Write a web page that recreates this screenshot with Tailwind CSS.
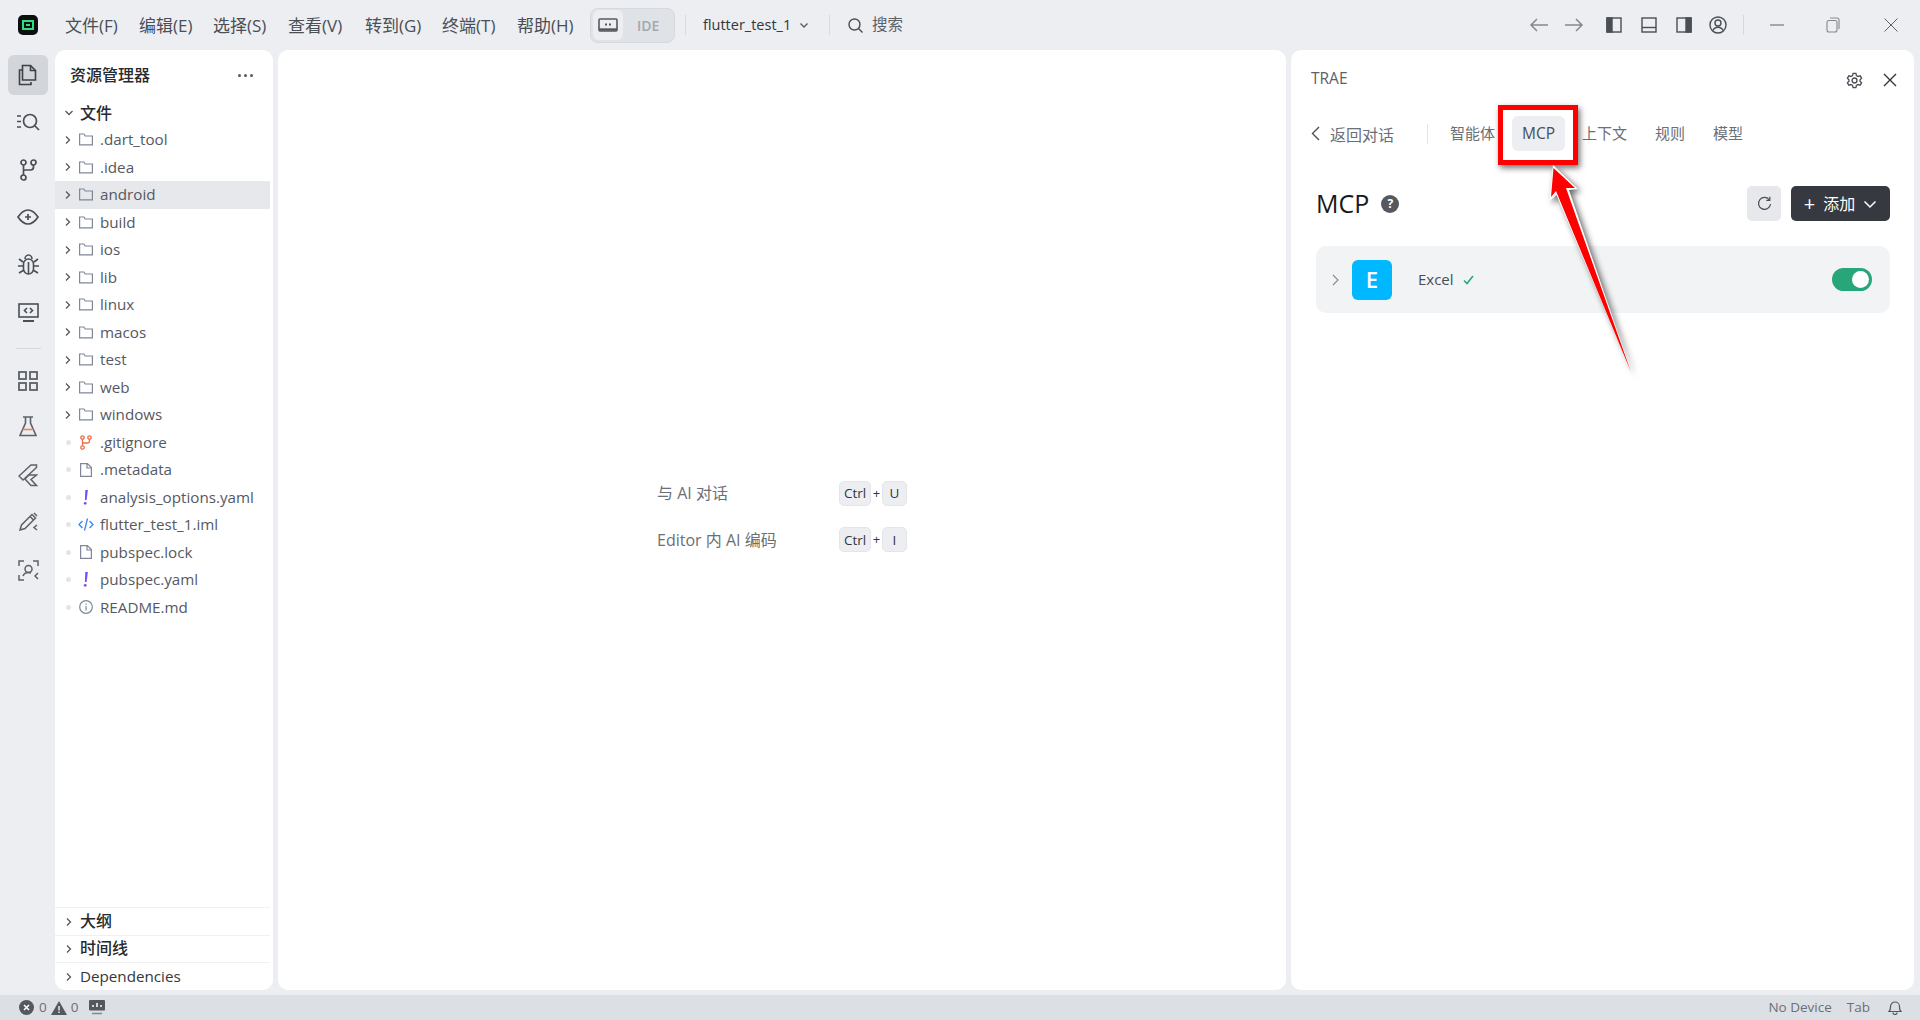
<!DOCTYPE html>
<html lang="zh">
<head>
<meta charset="UTF-8"/>
<title>TRAE</title>
<script src="https://cdn.jsdelivr.net/npm/@tailwindcss/browser@4"></script>
</head>
<body class="relative w-[1920px] h-[1020px] overflow-hidden bg-[#eceef2] text-[#4a4e55] font-['Open_Sans','Noto_Sans_CJK_SC',sans-serif] flex flex-col">

<!-- title bar -->
<header class="h-[50px] flex items-center shrink-0">
  <div class="ml-[18px] w-5 h-5 rounded-[5px] bg-[#0c0f10] flex items-center justify-center">
    <div class="w-3 h-[10px] border-2 border-[#2fdc7e] flex items-center justify-center"><div class="w-1 h-[2px] bg-[#2fdc7e]"></div></div>
  </div>
  <nav class="ml-[27px] flex gap-[20px] text-[17px] text-[#4a4e55] relative top-[1px]">
    <span class="w-[54px]">文件(F)</span><span class="w-[54px]">编辑(E)</span><span class="w-[55px]">选择(S)</span><span class="w-[57px]">查看(V)</span><span class="w-[57px]">转到(G)</span><span class="w-[55px]">终端(T)</span><span class="w-[58px]">帮助(H)</span>
  </nav>
  <div class="ml-[15px] w-[85px] h-[35px] rounded-[8px] bg-[#dfe2e7] border border-[#d5d8de] flex items-center pl-[2px]">
    <div class="w-[30px] h-[30px] rounded-[6px] bg-[#eceef2] flex items-center justify-center">
      <svg width="20" height="16" viewBox="0 0 20 16" fill="none" stroke="#55595f" stroke-width="1.6"><rect x="1" y="2" width="18" height="12" rx="1"/><path d="M1 12.5h18" stroke-width="2.4"/><path d="M7 7.5h2M11 7.5h2" stroke-width="2"/></svg>
    </div>
    <span class="ml-[14px] text-[14px] font-semibold text-[#a3a8b0]">IDE</span>
  </div>
  <div class="ml-[10px] w-px h-5 bg-[#d5d8de]"></div>
  <span class="ml-[17px] w-[86px] text-[14.5px] text-[#33363c]">flutter_test_1</span>
  <svg class="ml-[9px]" width="12" height="12" viewBox="0 0 12 12" fill="none" stroke="#55595f" stroke-width="1.3"><path d="M2.5 4.5 6 8l3.500-3.500"/></svg>
  <div class="ml-[19px] w-px h-5 bg-[#d5d8de]"></div>
  <svg class="ml-[17px]" width="17" height="17" viewBox="0 0 17 17" fill="none" stroke="#4a4e55" stroke-width="1.4"><circle cx="7.500" cy="7.500" r="5.500"/><path d="m11.500 11.500 4 4"/></svg>
  <span class="ml-[8px] text-[15.5px] text-[#5d6168]">搜索</span>

  <div class="ml-auto flex items-center">
    <svg width="20" height="16" viewBox="0 0 20 16" fill="none" stroke="#84888f" stroke-width="1.5"><path d="M19 8H2M8 2 2 8l6 6"/></svg>
    <svg class="ml-[15px]" width="20" height="16" viewBox="0 0 20 16" fill="none" stroke="#84888f" stroke-width="1.5"><path d="M1 8h17M12 2l6 6-6 6"/></svg>
    <svg class="ml-[22px]" width="16" height="16" viewBox="0 0 16 16" fill="none" stroke="#4a4e55" stroke-width="1.4"><rect x="1" y="1" width="14" height="14"/><rect x="1" y="1" width="5" height="14" fill="#4a4e55"/></svg>
    <svg class="ml-[19px]" width="16" height="16" viewBox="0 0 16 16" fill="none" stroke="#4a4e55" stroke-width="1.4"><rect x="1" y="1" width="14" height="14"/><path d="M1 10.500h14"/></svg>
    <svg class="ml-[19px]" width="16" height="16" viewBox="0 0 16 16" fill="none" stroke="#4a4e55" stroke-width="1.4"><rect x="1" y="1" width="14" height="14"/><rect x="10" y="1" width="5" height="14" fill="#4a4e55"/></svg>
    <svg class="ml-[17px]" width="18" height="18" viewBox="0 0 18 18" fill="none" stroke="#4a4e55" stroke-width="1.4"><circle cx="9" cy="9" r="8"/><circle cx="9" cy="7" r="3"/><path d="M4 14.500c1-2.500 3-3.200 5-3.200s4 .7 5 3.200"/></svg>
    <div class="ml-[16px] w-px h-5 bg-[#d5d8de]"></div>
    <svg class="ml-[26px]" width="14" height="14" viewBox="0 0 14 14" fill="none" stroke="#5d6168" stroke-width="1"><path d="M0 7h14"/></svg>
    <svg class="ml-[42px]" width="14" height="16" viewBox="0 0 14 16" fill="none" stroke="#85898f" stroke-width="1.1"><rect x="1" y="3.500" width="10" height="11.500" rx="2"/><path d="M4 1h7a2 2 0 0 1 2 2v9"/></svg>
    <svg class="ml-[44px] mr-[22px]" width="14" height="14" viewBox="0 0 14 14" fill="none" stroke="#5d6168" stroke-width="1"><path d="m.5.5 13 13M13.500.5l-13 13"/></svg>
  </div>
</header>

<!-- main -->
<main class="flex h-[940px] shrink-0">
  <!-- activity bar -->
  <aside class="w-[55px] shrink-0 flex flex-col items-center pl-[1px] pt-[1px] text-[#55595f]">
    <div class="h-[47.5px] flex items-center"><div class="w-10 h-10 rounded-[6px] bg-[#d2d5da] flex items-center justify-center">
      <svg width="20" height="22" viewBox="0 0 20 22" fill="none" stroke="#3e4147" stroke-width="1.6"><path d="M6 16H2.500V1.500h8l5 5V16z" transform="translate(2 0)"/><path d="M12.500 1.500v5h5"/><path d="M4 6H1.500v14.500H13V18"/></svg>
    </div></div>
    <div class="h-[47.5px] flex items-center">
      <svg width="23" height="18" viewBox="0 0 23 18" fill="none" stroke="#4a4e55" stroke-width="1.7"><path d="M0 3h4M0 8.500h4M0 14h4"/><circle cx="13" cy="8" r="6.500"/><path d="m18 13 4 4"/></svg>
    </div>
    <div class="h-[47.5px] flex items-center">
      <svg width="17" height="22" viewBox="0 0 17 22" fill="none" stroke="#4a4e55" stroke-width="1.7"><circle cx="3.500" cy="3.500" r="2.500"/><circle cx="13.500" cy="3.500" r="2.500"/><circle cx="3.500" cy="18.500" r="2.500"/><path d="M3.500 6v10M13.500 6v2a3 3 0 0 1-3 3H3.500"/></svg>
    </div>
    <div class="h-[47.5px] flex items-center">
      <svg width="22" height="16" viewBox="0 0 22 16" fill="none" stroke="#4a4e55" stroke-width="1.7"><path d="M1 8c3-4.500 6-7 10-7s7 2.500 10 7c-3 4.500-6 7-10 7S4 12.500 1 8z"/><path d="M11 5v6M8 8h6"/></svg>
    </div>
    <div class="h-[47.5px] flex items-center">
      <svg width="21" height="21" viewBox="0 0 21 21" fill="none" stroke="#4a4e55" stroke-width="1.6"><rect x="5.500" y="5" width="10" height="15" rx="5"/><path d="M7 5c0-2 1.500-4 3.500-4S14 3 14 5M10.500 8v12M1 5l4 3M20 5l-4 3M0 12h5M16 12h5M1 19l5-3M20 19l-5-3"/></svg>
    </div>
    <div class="h-[47.5px] flex items-center">
      <svg width="21" height="19" viewBox="0 0 21 19" fill="none" stroke="#4a4e55" stroke-width="1.6"><rect x="1" y="1" width="19" height="13"/><path d="M5 18h11" stroke-width="2"/><path d="m9 5-2.500 2.500L9 10M12 5l2.500 2.500L12 10"/></svg>
    </div>
    <div class="w-[25px] h-px bg-[#d5d8de] mt-[12px] mb-[8px]"></div>
    <div class="h-[47.5px] flex items-center">
      <svg width="20" height="20" viewBox="0 0 20 20" fill="none" stroke="#5d6168" stroke-width="1.8"><rect x="1" y="1" width="7" height="7"/><rect x="12" y="1" width="7" height="7"/><rect x="1" y="12" width="7" height="7"/><rect x="12" y="12" width="7" height="7"/></svg>
    </div>
    <div class="h-[47.5px] flex items-start pt-[11px]">
      <svg width="18" height="21" viewBox="0 0 18 21" fill="none" stroke="#5d6168" stroke-width="1.6"><path d="M4 1h10M6.500 1v6L1 19.500h16L11.500 7V1"/><path d="M3.500 13.500h11" stroke="#e28a5b"/></svg>
    </div>
    <div class="h-[47.5px] flex items-center">
      <svg width="20" height="23" viewBox="0 0 20 23" fill="none" stroke="#5d6168" stroke-width="1.5"><path d="M18.500 1H13L1 12l4 4L18.500 3.500zM18.500 11H11l-4 4 6 6.500h5.500L13 15.500z"/></svg>
    </div>
    <div class="h-[47.5px] flex items-start pt-[12px]">
      <svg width="19" height="19" viewBox="0 0 19 19" fill="none" stroke="#5d6168" stroke-width="1.5"><path d="M1 18l1.500-5L13 2.500 16.500 6 6 16.500zM11 4.500 14.500 8M15 1l3 3"/><path d="m18 13-3 2.500 3 2.500" /></svg>
    </div>
    <div class="h-[47.5px] flex items-center">
      <svg width="21" height="21" viewBox="0 0 21 21" fill="none" stroke="#5d6168" stroke-width="1.5"><path d="M1 6V1h5M15 1h5v5M1 15v5h5"/><circle cx="10.500" cy="9" r="3.500"/><path d="M5 16c1-2.500 3-3.500 5.500-3.500 1 0 1.800.2 2.500.5"/><path d="m20 13-3 3 3 3"/></svg>
    </div>
  </aside>

  <!-- explorer -->
  <section class="w-[218px] shrink-0 bg-white rounded-[10px] flex flex-col pr-[3px]">
    <div class="h-[50px] flex items-center justify-between pl-[15px] pr-[17px] shrink-0">
      <span class="text-[16px] font-medium text-[#26292e]">资源管理器</span>
      <div class="flex gap-[3px]"><i class="w-[3px] h-[3px] rounded-full bg-[#55595f]"></i><i class="w-[3px] h-[3px] rounded-full bg-[#55595f]"></i><i class="w-[3px] h-[3px] rounded-full bg-[#55595f]"></i></div>
    </div>
    <div class="h-[26px] flex items-center shrink-0">
      <svg class="ml-[9px]" width="10" height="10" viewBox="0 0 10 10" fill="none" stroke="#55595f" stroke-width="1.3"><path d="M1.500 3 5 6.500 8.500 3"/></svg>
      <span class="ml-[6px] text-[16px] font-medium text-[#26292e]">文件</span>
    </div>
    <ul class="text-[15.2px] text-[#55595f] shrink-0">
      <li class="h-[27.5px] flex items-center"><svg class="ml-[8px]" width="10" height="10" viewBox="0 0 10 10" fill="none" stroke="#55595f" stroke-width="1.300"><path d="m3 1.500 3.500 3.500L3 8.500"/></svg><svg class="ml-[6px]" width="14" height="13" viewBox="0 0 14 13" fill="none" stroke="#7f8798" stroke-width="1.200"><path d="M.6 11.900V1h4.300l1.300 2h7.200v8.900z"/></svg><span class="ml-[7px]">.dart_tool</span></li>
      <li class="h-[27.5px] flex items-center"><svg class="ml-[8px]" width="10" height="10" viewBox="0 0 10 10" fill="none" stroke="#55595f" stroke-width="1.300"><path d="m3 1.500 3.500 3.500L3 8.500"/></svg><svg class="ml-[6px]" width="14" height="13" viewBox="0 0 14 13" fill="none" stroke="#7f8798" stroke-width="1.200"><path d="M.6 11.900V1h4.300l1.300 2h7.200v8.900z"/></svg><span class="ml-[7px]">.idea</span></li>
      <li class="h-[27.5px] flex items-center bg-[#e7e8eb]"><svg class="ml-[8px]" width="10" height="10" viewBox="0 0 10 10" fill="none" stroke="#55595f" stroke-width="1.300"><path d="m3 1.500 3.500 3.500L3 8.500"/></svg><svg class="ml-[6px]" width="14" height="13" viewBox="0 0 14 13" fill="none" stroke="#7f8798" stroke-width="1.200"><path d="M.6 11.900V1h4.300l1.300 2h7.200v8.900z"/></svg><span class="ml-[7px]">android</span></li>
      <li class="h-[27.5px] flex items-center"><svg class="ml-[8px]" width="10" height="10" viewBox="0 0 10 10" fill="none" stroke="#55595f" stroke-width="1.300"><path d="m3 1.500 3.500 3.500L3 8.500"/></svg><svg class="ml-[6px]" width="14" height="13" viewBox="0 0 14 13" fill="none" stroke="#7f8798" stroke-width="1.200"><path d="M.6 11.900V1h4.300l1.300 2h7.200v8.900z"/></svg><span class="ml-[7px]">build</span></li>
      <li class="h-[27.5px] flex items-center"><svg class="ml-[8px]" width="10" height="10" viewBox="0 0 10 10" fill="none" stroke="#55595f" stroke-width="1.300"><path d="m3 1.500 3.500 3.500L3 8.500"/></svg><svg class="ml-[6px]" width="14" height="13" viewBox="0 0 14 13" fill="none" stroke="#7f8798" stroke-width="1.200"><path d="M.6 11.900V1h4.300l1.300 2h7.200v8.900z"/></svg><span class="ml-[7px]">ios</span></li>
      <li class="h-[27.5px] flex items-center"><svg class="ml-[8px]" width="10" height="10" viewBox="0 0 10 10" fill="none" stroke="#55595f" stroke-width="1.300"><path d="m3 1.500 3.500 3.500L3 8.500"/></svg><svg class="ml-[6px]" width="14" height="13" viewBox="0 0 14 13" fill="none" stroke="#7f8798" stroke-width="1.200"><path d="M.6 11.900V1h4.300l1.300 2h7.200v8.900z"/></svg><span class="ml-[7px]">lib</span></li>
      <li class="h-[27.5px] flex items-center"><svg class="ml-[8px]" width="10" height="10" viewBox="0 0 10 10" fill="none" stroke="#55595f" stroke-width="1.300"><path d="m3 1.500 3.500 3.500L3 8.500"/></svg><svg class="ml-[6px]" width="14" height="13" viewBox="0 0 14 13" fill="none" stroke="#7f8798" stroke-width="1.200"><path d="M.6 11.900V1h4.300l1.300 2h7.200v8.900z"/></svg><span class="ml-[7px]">linux</span></li>
      <li class="h-[27.5px] flex items-center"><svg class="ml-[8px]" width="10" height="10" viewBox="0 0 10 10" fill="none" stroke="#55595f" stroke-width="1.300"><path d="m3 1.500 3.500 3.500L3 8.500"/></svg><svg class="ml-[6px]" width="14" height="13" viewBox="0 0 14 13" fill="none" stroke="#7f8798" stroke-width="1.200"><path d="M.6 11.900V1h4.300l1.300 2h7.200v8.900z"/></svg><span class="ml-[7px]">macos</span></li>
      <li class="h-[27.5px] flex items-center"><svg class="ml-[8px]" width="10" height="10" viewBox="0 0 10 10" fill="none" stroke="#55595f" stroke-width="1.300"><path d="m3 1.500 3.500 3.500L3 8.500"/></svg><svg class="ml-[6px]" width="14" height="13" viewBox="0 0 14 13" fill="none" stroke="#7f8798" stroke-width="1.200"><path d="M.6 11.900V1h4.300l1.300 2h7.200v8.900z"/></svg><span class="ml-[7px]">test</span></li>
      <li class="h-[27.5px] flex items-center"><svg class="ml-[8px]" width="10" height="10" viewBox="0 0 10 10" fill="none" stroke="#55595f" stroke-width="1.300"><path d="m3 1.500 3.500 3.500L3 8.500"/></svg><svg class="ml-[6px]" width="14" height="13" viewBox="0 0 14 13" fill="none" stroke="#7f8798" stroke-width="1.200"><path d="M.6 11.900V1h4.300l1.300 2h7.200v8.900z"/></svg><span class="ml-[7px]">web</span></li>
      <li class="h-[27.5px] flex items-center"><svg class="ml-[8px]" width="10" height="10" viewBox="0 0 10 10" fill="none" stroke="#55595f" stroke-width="1.300"><path d="m3 1.500 3.500 3.500L3 8.500"/></svg><svg class="ml-[6px]" width="14" height="13" viewBox="0 0 14 13" fill="none" stroke="#7f8798" stroke-width="1.200"><path d="M.6 11.900V1h4.300l1.300 2h7.200v8.900z"/></svg><span class="ml-[7px]">windows</span></li>
      <li class="h-[27.5px] flex items-center"><i class="ml-[11px] w-[5px] h-[5px] rounded-full bg-[#e3e5e8]"></i><span class="w-[14px] ml-[8px] flex justify-center"><svg width="12" height="15" viewBox="0 0 12 15" fill="none" stroke="#ee6f47" stroke-width="1.300"><circle cx="2.500" cy="2.500" r="1.700"/><circle cx="9.500" cy="2.500" r="1.700"/><circle cx="2.500" cy="12.500" r="1.700"/><path d="M2.500 4.200v6.600M9.500 4.200v1.800a2 2 0 0 1-2 2h-5"/></svg></span><span class="ml-[7px]">.gitignore</span></li>
      <li class="h-[27.5px] flex items-center"><i class="ml-[11px] w-[5px] h-[5px] rounded-full bg-[#e3e5e8]"></i><span class="w-[14px] ml-[8px] flex justify-center"><svg width="12" height="14" viewBox="0 0 12 14" fill="none" stroke="#7f8798" stroke-width="1.200"><path d="M.6 13.400V.6h6.800l4 4v8.800zM7 .6v4.400h4.400"/></svg></span><span class="ml-[7px]">.metadata</span></li>
      <li class="h-[27.5px] flex items-center"><i class="ml-[11px] w-[5px] h-[5px] rounded-full bg-[#e3e5e8]"></i><span class="w-[14px] ml-[8px] flex justify-center"><svg width="6" height="15" viewBox="0 0 6 15" fill="#7c4dff"><path d="M2.300 0h2.600L3.600 10H1.900z"/><circle cx="2.200" cy="13.300" r="1.400"/></svg></span><span class="ml-[7px]">analysis_options.yaml</span></li>
      <li class="h-[27.5px] flex items-center"><i class="ml-[11px] w-[5px] h-[5px] rounded-full bg-[#e3e5e8]"></i><span class="w-[16px] ml-[7px] flex justify-center"><svg width="16" height="13" viewBox="0 0 16 13" fill="none" stroke="#3b82f6" stroke-width="1.300"><path d="M4.500 3 1 6.500 4.500 10M11.500 3 15 6.500 11.500 10M9.500 .5l-3 12"/></svg></span><span class="ml-[6px]">flutter_test_1.iml</span></li>
      <li class="h-[27.5px] flex items-center"><i class="ml-[11px] w-[5px] h-[5px] rounded-full bg-[#e3e5e8]"></i><span class="w-[14px] ml-[8px] flex justify-center"><svg width="12" height="14" viewBox="0 0 12 14" fill="none" stroke="#7f8798" stroke-width="1.200"><path d="M.6 13.400V.6h6.800l4 4v8.800zM7 .6v4.400h4.400"/></svg></span><span class="ml-[7px]">pubspec.lock</span></li>
      <li class="h-[27.5px] flex items-center"><i class="ml-[11px] w-[5px] h-[5px] rounded-full bg-[#e3e5e8]"></i><span class="w-[14px] ml-[8px] flex justify-center"><svg width="6" height="15" viewBox="0 0 6 15" fill="#7c4dff"><path d="M2.300 0h2.600L3.600 10H1.900z"/><circle cx="2.200" cy="13.300" r="1.400"/></svg></span><span class="ml-[7px]">pubspec.yaml</span></li>
      <li class="h-[27.5px] flex items-center"><i class="ml-[11px] w-[5px] h-[5px] rounded-full bg-[#e3e5e8]"></i><span class="w-[14px] ml-[8px] flex justify-center"><svg width="14" height="14" viewBox="0 0 14 14" fill="none" stroke="#7f8798" stroke-width="1.200"><circle cx="7" cy="7" r="6.300"/><path d="M7 6v4.500M7 3.500v1.200"/></svg></span><span class="ml-[7px]">README.md</span></li>
    </ul>
    <div class="mt-auto shrink-0">
      <div class="h-[28px] flex items-center border-t border-[#eef0f2]"><svg class="ml-[9px]" width="10" height="10" viewBox="0 0 10 10" fill="none" stroke="#55595f" stroke-width="1.300"><path d="m3 1.500 3.500 3.500L3 8.500"/></svg><span class="ml-[6px] text-[16px] font-medium text-[#26292e] relative -top-[1px]">大纲</span></div>
      <div class="h-[27px] flex items-center border-t border-[#eef0f2]"><svg class="ml-[9px]" width="10" height="10" viewBox="0 0 10 10" fill="none" stroke="#55595f" stroke-width="1.300"><path d="m3 1.500 3.500 3.500L3 8.500"/></svg><span class="ml-[6px] text-[16px] font-medium text-[#26292e] relative -top-[1px]">时间线</span></div>
      <div class="h-[28px] flex items-center border-t border-[#eef0f2]"><svg class="ml-[9px]" width="10" height="10" viewBox="0 0 10 10" fill="none" stroke="#55595f" stroke-width="1.300"><path d="m3 1.500 3.500 3.500L3 8.500"/></svg><span class="ml-[6px] text-[15.2px] text-[#33363c]">Dependencies</span></div>
    </div>
  </section>

  <!-- editor placeholder -->
  <section class="ml-[5px] w-[1008px] shrink-0 bg-white rounded-[10px] pl-[379px] pt-[420px] text-[16px] text-[#6b6f76]">
    <div class="h-[46.5px] flex items-center">
      <span class="w-[182px]">与 AI 对话</span>
      <kbd class="w-8 h-[25px] flex items-center justify-center rounded-[5px] bg-[#eceef2] border border-[#e3e5e9] text-[13.5px] font-medium text-[#33363c] font-['Open_Sans']">Ctrl</kbd>
      <span class="w-[11px] text-center text-[13px] text-[#33363c]">+</span>
      <kbd class="w-[25px] h-[25px] flex items-center justify-center rounded-[5px] bg-[#eceef2] border border-[#e3e5e9] text-[13.5px] font-medium text-[#33363c] font-['Open_Sans']">U</kbd>
    </div>
    <div class="h-[46.5px] flex items-center">
      <span class="w-[182px]">Editor 内 AI 编码</span>
      <kbd class="w-8 h-[25px] flex items-center justify-center rounded-[5px] bg-[#eceef2] border border-[#e3e5e9] text-[13.5px] font-medium text-[#33363c] font-['Open_Sans']">Ctrl</kbd>
      <span class="w-[11px] text-center text-[13px] text-[#33363c]">+</span>
      <kbd class="w-[25px] h-[25px] flex items-center justify-center rounded-[5px] bg-[#eceef2] border border-[#e3e5e9] text-[13.5px] font-medium text-[#33363c] font-['Open_Sans']">I</kbd>
    </div>
  </section>

  <!-- TRAE panel -->
  <section class="ml-[5px] w-[623px] shrink-0 bg-white rounded-[10px] flex flex-col">
    <div class="h-[60px] flex items-center pl-[20px] pr-[17px] shrink-0">
      <span class="text-[15.5px] font-medium text-[#5d6168] relative -top-[1px]">TRAE</span>
      <svg class="ml-auto" width="17" height="17" viewBox="0 0 24 24" fill="none" stroke="#4a4e55" stroke-width="1.900"><circle cx="12" cy="12" r="3.500"/><path d="M10 2h4l.7 3 2.300 1.300 3-.9 2 3.400-2.200 2.200v2l2.200 2.200-2 3.400-3-.9-2.300 1.300-.7 3h-4l-.7-3L7 17.700l-3 .9-2-3.400L4.200 13v-2L2 8.800l2-3.400 3 .9L9.300 5z"/></svg>
      <svg class="ml-[20px]" width="14" height="14" viewBox="0 0 14 14" fill="none" stroke="#33363c" stroke-width="1.400"><path d="m1 1 12 12M13 1 1 13"/></svg>
    </div>
    <div class="h-[35px] mt-[6px] flex items-center pl-[20px] shrink-0 text-[15px] text-[#6b6f76]">
      <svg width="9" height="15" viewBox="0 0 9 15" fill="none" stroke="#4a4e55" stroke-width="1.400"><path d="M8 1 1.500 7.500 8 14"/></svg>
      <span class="ml-[10px] relative top-[1px] text-[16px]">返回对话</span>
      <div class="ml-[33px] w-px h-5 bg-[#e3e5e9]"></div>
      <span class="ml-[22px]">智能体</span>
      <span class="ml-[17px] w-[53px] h-[35px] rounded-[6px] bg-[#eceef2] flex items-center justify-center text-[#4a4e55] text-[15.5px]">MCP</span>
      <span class="ml-[17px]">上下文</span>
      <span class="ml-[28px]">规则</span>
      <span class="ml-[28px]">模型</span>
    </div>
    <div class="mt-[35px] h-[35px] flex items-center pl-[25px] pr-[24px] shrink-0">
      <span class="text-[25px] leading-none text-[#17191c]">MCP</span>
      <span class="ml-[12px] w-[18px] h-[18px] rounded-full bg-[#55595f] text-white text-[12px] font-bold flex items-center justify-center">?</span>
      <button class="ml-auto w-[34px] h-[35px] rounded-[5px] bg-[#e7e8eb] flex items-center justify-center">
        <svg width="15" height="15" viewBox="0 0 15 15" fill="none" stroke="#4a4e55" stroke-width="1.200"><path d="M12.500 4A6 6 0 1 0 13.500 8"/><path d="M12.800 .8V4.300H9.300"/></svg>
      </button>
      <button class="ml-[10px] w-[99px] h-[35px] rounded-[5px] bg-[#36393f] text-white text-[16px] flex items-center justify-center gap-[8px]">
        <span class="text-[20px] leading-none">+</span><span>添加</span>
        <svg width="14" height="14" viewBox="0 0 14 14" fill="none" stroke="#fff" stroke-width="1.500"><path d="m1.500 4.500 5.500 5.500 5.500-5.500"/></svg>
      </button>
    </div>
    <div class="mt-[25px] ml-[25px] mr-[24px] h-[67px] rounded-[10px] bg-[#f2f3f5] flex items-center shrink-0">
      <svg class="ml-[16px]" width="7" height="12" viewBox="0 0 7 12" fill="none" stroke="#85898f" stroke-width="1.100"><path d="m1 1 5 5-5 5"/></svg>
      <div class="ml-[13px] w-10 h-10 rounded-[6px] bg-[#00b8ff] text-white text-[22px] font-semibold flex items-center justify-center">E</div>
      <span class="ml-[26px] text-[15px] text-[#4a4e55]">Excel</span>
      <svg class="ml-[9px]" width="11" height="10" viewBox="0 0 11 10" fill="none" stroke="#27a67a" stroke-width="1.600"><path d="m1 5.500 3 3L10 1"/></svg>
      <div class="ml-auto mr-[18px] w-10 h-[23px] rounded-full bg-[#27a67a] flex items-center justify-end pr-[3px]"><div class="w-[17px] h-[17px] rounded-full bg-white"></div></div>
    </div>
  </section>
</main>

<!-- status bar -->
<footer class="mt-[5px] h-[25px] shrink-0 bg-[#dcdfe4] flex items-center text-[13.5px] text-[#6b6f76]">
  <svg class="ml-[19px]" width="15" height="15" viewBox="0 0 15 15"><circle cx="7.500" cy="7.500" r="7.500" fill="#55595f"/><path d="m5 5 5 5M10 5l-5 5" stroke="#fff" stroke-width="1.500"/></svg>
  <span class="ml-[5px]">0</span>
  <svg class="ml-[4px]" width="16" height="14" viewBox="0 0 16 14"><path d="M8 0 16 14H0z" fill="#55595f"/><path d="M8 5v4.500M8 10.500v1.500" stroke="#fff" stroke-width="1.300"/></svg>
  <span class="ml-[4px]">0</span>
  <svg class="ml-[11px]" width="16" height="15" viewBox="0 0 16 15"><rect width="16" height="10.500" rx="1" fill="#55595f"/><path d="M4 7V5M8 7V3M12 7V5" stroke="#fff" stroke-width="1.500"/><path d="M3 13.500h10" stroke="#85898f" stroke-width="1.500"/></svg>
  <span class="ml-auto">No Device</span>
  <span class="ml-[15px]">Tab</span>
  <svg class="ml-[18px] mr-[18px]" width="14" height="15" viewBox="0 0 14 15" fill="none" stroke="#55595f" stroke-width="1.200"><path d="M1 11.500c1.500-1 1.500-2.500 1.500-5a4.500 4.500 0 0 1 9 0c0 2.500 0 4 1.500 5zM5 12.500a2 2 0 0 0 4 0"/></svg>
</footer>

<!-- annotation drawn over the screenshot -->
<div class="absolute left-[1498px] top-[105px] w-[80px] h-[60px] border-[5px] border-[#ff0000] shadow-[2px_3px_6px_rgba(0,0,0,0.55)]"></div>
<svg class="absolute left-0 top-0 pointer-events-none drop-shadow-[3px_3px_3px_rgba(0,0,0,0.6)]" width="1920" height="1020" viewBox="0 0 1920 1020">
  <path d="M1553 165 1578 189 1569 190 1632 374 1556.500 195 1549.500 201z" fill="#fff"/>
  <path d="M1553.500 168 1575 188 1566 188 1631 372 1556 191 1551 197z" fill="#ff0000"/>
</svg>

</body>
</html>
